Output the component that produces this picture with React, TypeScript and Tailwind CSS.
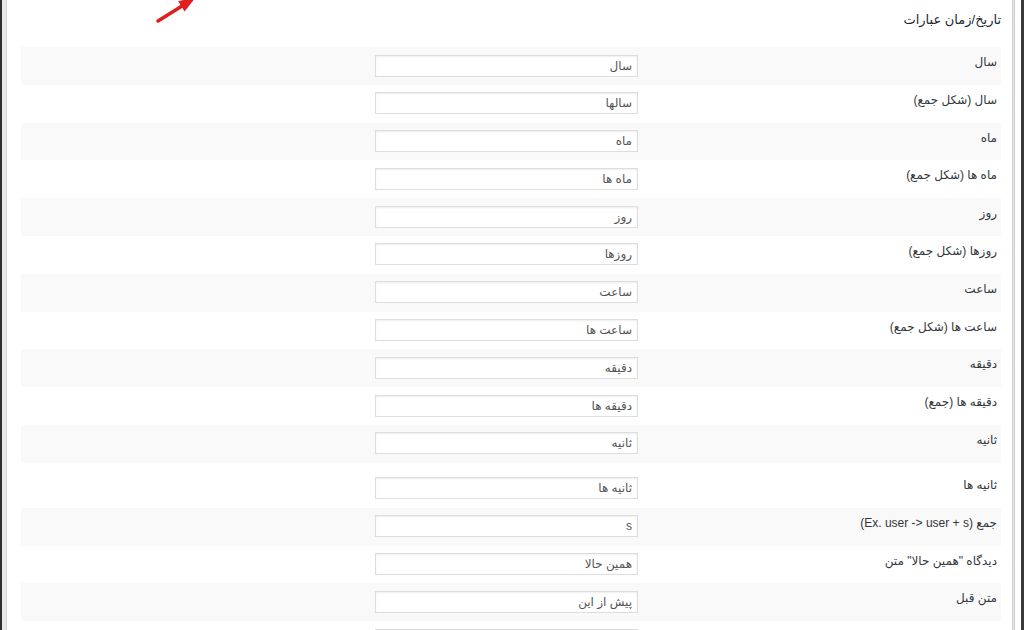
import React from "react";

type Phrase = {
  label: React.ReactNode;
  value: string;
  tall?: boolean;
};

const phrases: Phrase[] = [
  { label: "سال", value: "سال" },
  { label: "سال (شکل جمع)", value: "سالها" },
  { label: "ماه", value: "ماه" },
  { label: "ماه ها (شکل جمع)", value: "ماه ها" },
  { label: "روز", value: "روز" },
  { label: "روزها (شکل جمع)", value: "روزها" },
  { label: "ساعت", value: "ساعت" },
  { label: "ساعت ها (شکل جمع)", value: "ساعت ها" },
  { label: "دقیقه", value: "دقیقه" },
  { label: "دقیقه ها (جمع)", value: "دقیقه ها" },
  { label: "ثانیه", value: "ثانیه" },
  { label: "ثانیه ها", value: "ثانیه ها", tall: true },
  {
    label: (
      <>
        جمع <bdi dir="ltr">(Ex. user -&gt; user + s)</bdi>
      </>
    ),
    value: "s",
  },
  { label: 'دیدگاه "همین حالا" متن', value: "همین حالا" },
  { label: "متن قبل", value: "پیش از این" },
  { label: "متن بعد از", value: "بعد از این" },
];

function PhraseRow({ phrase, striped }: { phrase: Phrase; striped: boolean }) {
  return (
    <div
      className={
        (striped ? "bg-[#f9f9f9] " : "bg-white ") +
        (phrase.tall ? "h-[45px] pt-[7px] " : "h-[37.8px] ") +
        "flex shrink-0 items-start"
      }
    >
      <label className="w-[363px] shrink-0 pr-[4px] pt-[7px] text-[12px] leading-[16px] text-[#32373c]">
        {phrase.label}
      </label>
      <input
        type="text"
        readOnly
        value={phrase.value}
        className="mt-[7.5px] h-[22px] w-[263px] border border-[#dddddd] bg-white px-[5px] text-right text-[12px] text-[#555] shadow-[inset_0_1px_2px_rgba(0,0,0,0.07)] outline-none"
      />
    </div>
  );
}

export default function App() {
  return (
    <div
      className="relative flex h-[630px] w-[1024px] overflow-hidden bg-white"
      style={{ fontFamily: '"Liberation Sans", "DejaVu Sans", sans-serif' }}
    >
      <div className="w-[2px] shrink-0 bg-[#2e2e2e]" />
      <div className="w-[5px] shrink-0 border-r border-[#d6d6d6] bg-[#e8e8e8]" />

      <main dir="rtl" className="flex min-w-0 flex-1 flex-col pl-[14px] pr-[11px]">
        <h3 className="h-[47px] shrink-0 pt-[11px] text-[13px] leading-[18px] text-[#23282d]">
          تاریخ/زمان عبارات
        </h3>
        {phrases.map((p, i) => (
          <PhraseRow key={i} phrase={p} striped={i % 2 === 0} />
        ))}
      </main>

      <div className="w-[3px] shrink-0 border-x border-[#cfcfcf] bg-[#e6e6e6]" />
      <div className="w-[6px] shrink-0 bg-white" />
      <div className="w-[3px] shrink-0 bg-[#3a3a3a]" />

      {/* red annotation arrow */}
      <svg
        className="pointer-events-none absolute left-[150px] top-0"
        width="52"
        height="30"
        viewBox="0 0 52 30"
      >
        <line x1="8" y1="21" x2="32" y2="6" stroke="#e01e1e" strokeWidth="3.5" strokeLinecap="round" />
        <polygon points="46,-3 34.6,11.5 28.2,1.3" fill="#e01e1e" />
      </svg>
    </div>
  );
}
